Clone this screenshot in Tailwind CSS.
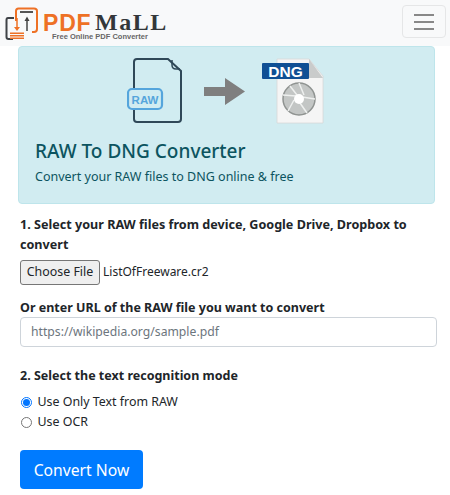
<!DOCTYPE html>
<html><head><meta charset="utf-8"><script src="https://cdn.jsdelivr.net/npm/@tailwindcss/browser@4"></script></head>
<body class="bg-white overflow-hidden font-['Noto_Sans',sans-serif] text-[#212529]">
<div class="w-[450px] h-[495px] overflow-hidden">
<nav class="h-[46px] bg-[#f8f9fa] flex justify-between items-start">
  <div class="relative w-[175px] h-[46px] ml-[5px] shrink-0">
    <svg class="absolute left-0 top-[7px]" width="34" height="34" viewBox="0 0 34 34" fill="none">
      <path d="M9 11H3Q1.5 11 1.5 13V30Q1.5 32 3.5 32H8" stroke="#3f4347" stroke-width="2"/>
      <path d="M11 14V4Q11 1.5 13.5 1.5H29Q32 1.5 32 4V22Q32 25 29 25H27" stroke="#ee7125" stroke-width="2"/>
      <rect x="15" y="4" width="13" height="2" fill="#555"/>
      <path d="M12 11V22" stroke="#ee7125" stroke-width="1.5"/><path d="M9 20H15L12 24Z" fill="#ee7125"/>
      <path d="M22 11V24" stroke="#444" stroke-width="1.5"/><path d="M19.5 14L22 9.5L24.5 14Z" fill="#444"/>
      <rect x="5" y="25.5" width="14" height="1.5" fill="#ee7125"/><rect x="5" y="28" width="14" height="1.5" fill="#ee7125"/><rect x="5" y="30.5" width="14" height="1.5" fill="#ee7125"/>
    </svg>
    <span class="absolute left-[38px] top-[15px] text-[23px] leading-[16px] font-bold text-[#ee7125] font-['Liberation_Sans',sans-serif] tracking-[0.8px]">PDF</span>
    <span class="absolute left-[90px] top-[14px] text-[24px] leading-[16px] font-bold text-[#33373a] font-['Liberation_Serif',serif] tracking-[1.5px]">MaLL</span>
    <span class="absolute left-[47px] top-[33px] text-[7.5px] leading-[8px] font-bold text-[#666] font-['Liberation_Sans',sans-serif] whitespace-nowrap">Free Online PDF Converter</span>
  </div>
  <button class="mt-[5px] mr-[4px] w-[44px] h-[33px] border border-[#e5e6e7] rounded-[4px] flex flex-col justify-center items-center gap-[5px]">
    <span class="block w-[20px] h-[2px] bg-[#888888]"></span><span class="block w-[20px] h-[2px] bg-[#888888]"></span><span class="block w-[20px] h-[2px] bg-[#888888]"></span>
  </button>
</nav>
<section class="ml-[18px] w-[417px] h-[158px] bg-[#d1ecf1] border border-[#bee5eb] rounded-[4px] pl-[16px] text-[#0c5460] flex flex-col">
  <svg class="ml-[92px] mt-[9px] shrink-0" width="200" height="68" viewBox="0 0 200 68" fill="none">
    <path d="M7 33V6Q7 3 10 3H41L54 15V63Q54 66 51 66H10Q7 66 7 63V53" stroke="#2f4858" stroke-width="2"/>
    <path d="M45 4V9Q45 13 49 13H53" stroke="#2f4858" stroke-width="1.5"/>
    <rect x="1" y="33" width="34" height="20" rx="4" fill="#d1ecf1" stroke="#55a5dc" stroke-width="2.2"/>
    <text x="18" y="47.500" font-family="Liberation Sans" font-weight="700" font-size="11.500" fill="#55a5dc" text-anchor="middle">RAW</text>
    <path d="M77 31H98V22L118 35.500L98 49V40H77Z" fill="#7f7f7f"/>
    <path d="M150 3H182L196 20V67H150Z" fill="#f5f5f5" stroke="#d8d8d8" stroke-width="0.8"/>
    <path d="M182 3V22H196Z" fill="#c9cbcb"/>
    <rect x="135" y="7" width="47" height="16" rx="1" fill="#0f4f94"/>
    <text x="158.500" y="20.500" font-family="Liberation Sans" font-weight="700" font-size="15.500" fill="#fff" text-anchor="middle">DNG</text>
    <circle cx="172" cy="43" r="16" fill="#c3c6c5" stroke="#8f9391" stroke-width="1.500"/>
    <path d="M172 27L177 39M188 43L175 41M180 57L173 47M161 55L167 44M156 39L169 40M163 30L170 39" stroke="#eef0ef" stroke-width="1.500"/>
    <circle cx="172" cy="43" r="5" fill="#fff"/>
  </svg>
  <h1 class="mt-[15px] text-[19px] leading-[24px] font-medium whitespace-nowrap text-[#0c5460]">RAW To DNG Converter</h1>
  <p class="mt-[4px] text-[12.5px] leading-[20px] whitespace-nowrap">Convert your RAW files to DNG online &amp; free</p>
</section>
<form class="ml-[20px] w-[417px] mt-[11px] text-[12.4px] leading-[20px]">
  <p class="font-bold text-[12.6px]">1. Select your RAW files from device, Google Drive, Dropbox to convert</p>
  <div class="mt-[4px] h-[26px] flex items-center">
    <span class="h-[25px] w-[80px] border border-[#767676] rounded-[3px] bg-[#efefef] flex items-center justify-center whitespace-nowrap">Choose File</span>
    <span class="ml-[3px] text-[12px] whitespace-nowrap">ListOfFreeware.cr2</span>
  </div>
  <p class="mt-[13px] font-bold text-[12.5px] leading-[19px] whitespace-nowrap">Or enter URL of the RAW file you want to convert</p>
  <div class="h-[30px] border border-[#ced4da] rounded-[4px] px-[10px] flex items-center text-[#6c757d] text-[12.2px]">https://wikipedia.org/sample.pdf</div>
  <p class="mt-[19px] font-bold text-[12.5px] whitespace-nowrap">2. Select the text recognition mode</p>
  <div class="mt-[6px] h-[20px] flex items-center gap-[6px]">
    <span class="w-[11px] h-[11px] ml-[0.5px] rounded-full border border-[#0075ff] flex items-center justify-center"><span class="w-[7px] h-[7px] rounded-full bg-[#0075ff]"></span></span>
    <span>Use Only Text from RAW</span>
  </div>
  <div class="h-[20px] flex items-center gap-[6px]">
    <span class="w-[11px] h-[11px] ml-[0.5px] rounded-full border border-[#767676]"></span>
    <span>Use OCR</span>
  </div>
  <button type="button" class="mt-[18px] w-[123px] h-[39px] bg-[#007bff] rounded-[4px] text-white text-[15.7px] flex items-center justify-center whitespace-nowrap">Convert Now</button>
</form>
</div>
</body></html>
